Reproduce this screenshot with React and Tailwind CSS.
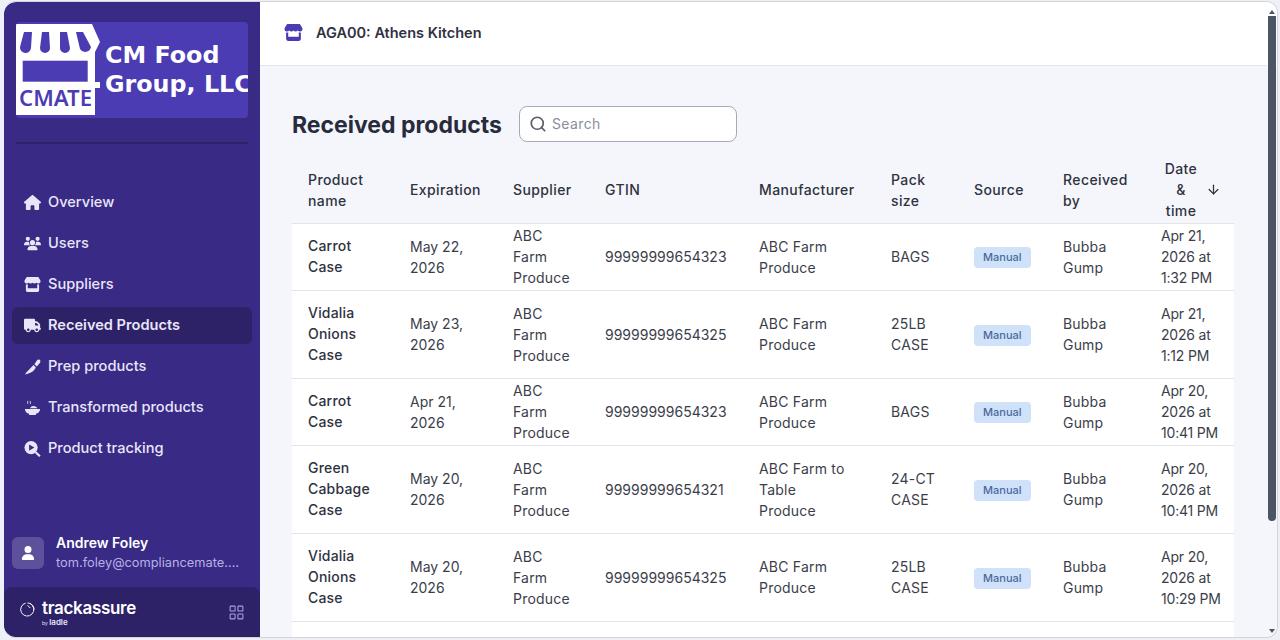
import { FaHouse, FaUsers, FaStore, FaTruck, FaUser } from "react-icons/fa6";
import { LuSearch, LuArrowDown, LuLayoutGrid } from "react-icons/lu";

const font = "font-['Inter','Liberation_Sans',sans-serif]";

function KnifeIcon() {
  return (
    <svg viewBox="0 0 18 18" className="w-[18px] h-[18px]" fill="currentColor">
      <path d="M1 17C5 16.5 9 14.5 11 12L12.6 9.6 10 7 6 11C4 13 2 15 1 17Z" />
      <path d="M11 6L13.6 8.6 17 4.4C17.6 3.4 17.4 2 16.6 1.4 15.8.8 14.8.9 14 1.7Z" />
    </svg>
  );
}

function BowlIcon() {
  return (
    <svg viewBox="0 0 18 18" className="w-[18px] h-[18px]" fill="currentColor">
      <path d="M1 10H17C17 12.8 15 14.6 12.6 15.2V16.5H5.4V15.2C3 14.6 1 12.8 1 10Z" />
      <path d="M6.5 9.2C7 7.6 8.4 6.8 10 6.8 12 6.8 13.4 7.8 14 9.2Z" />
      <path d="M3.6 1.5C4.6 2.6 3.2 3.4 4.2 4.6M6.4 1.5C7.4 2.6 6 3.4 7 4.6" fill="none" stroke="currentColor" strokeWidth="1" />
    </svg>
  );
}

function TrackIcon() {
  return (
    <svg viewBox="0 0 18 18" className="w-[18px] h-[18px]" fill="currentColor">
      <circle cx="7.5" cy="7.5" r="7" />
      <path d="M11.6 13.2L13.2 11.6 17.6 16 16 17.6Z" />
      <path d="M5.4 4.2V10.8L11 7.5Z" fill="#382a85" />
    </svg>
  );
}

const navItems = [
  { label: "Overview", icon: <FaHouse className="w-[17px] h-[17px]" /> },
  { label: "Users", icon: <FaUsers className="w-[17px] h-[17px]" /> },
  { label: "Suppliers", icon: <FaStore className="w-[17px] h-[17px]" /> },
  { label: "Received Products", icon: <FaTruck className="w-[17px] h-[17px]" />, active: true },
  { label: "Prep products", icon: <KnifeIcon /> },
  { label: "Transformed products", icon: <BowlIcon /> },
  { label: "Product tracking", icon: <TrackIcon /> },
];

const rows = [
  ["Carrot Case", "May 22, 2026", "99999999654323", "ABC Farm Produce", "BAGS", "Apr 21, 2026 at 1:32 PM"],
  ["Vidalia Onions Case", "May 23, 2026", "99999999654325", "ABC Farm Produce", "25LB CASE", "Apr 21, 2026 at 1:12 PM"],
  ["Carrot Case", "Apr 21, 2026", "99999999654323", "ABC Farm Produce", "BAGS", "Apr 20, 2026 at 10:41 PM"],
  ["Green Cabbage Case", "May 20, 2026", "99999999654321", "ABC Farm to Table Produce", "24-CT CASE", "Apr 20, 2026 at 10:41 PM"],
  ["Vidalia Onions Case", "May 20, 2026", "99999999654325", "ABC Farm Produce", "25LB CASE", "Apr 20, 2026 at 10:29 PM"],
];

function Logo() {
  return (
    <div className="h-24 rounded bg-[#4c3cb4] flex items-center overflow-hidden">
      <svg viewBox="0 0 86 96" className="w-[86px] h-24 shrink-0">
        <path d="M0 2H76L84 20 79 30V60H84V66H79V93H0Z" fill="#fff" />
        <path
          d="M8 10H16L15 26A5.5 5.5 0 0 1 4 25Z M26 10H33L34 26A5 5 0 0 1 24 26Z M44 10H51L54 26A5 5 0 0 1 44 26Z M60 10H67L75 25A6 6 0 0 1 64 27Z"
          fill="#4c3cb4"
        />
        <rect x="6.7" y="38.7" width="65" height="21" fill="#4c3cb4" />
        <text x="3" y="84" fill="#4c3cb4" className="font-['Noto_Sans',sans-serif] font-semibold" fontSize="22" textLength="73" lengthAdjust="spacingAndGlyphs">
          CMATE
        </text>
      </svg>
      <div className="pl-[3px] -mt-[1px] font-['DejaVu_Sans',sans-serif] font-bold text-white text-[23.8px] leading-[29px] whitespace-nowrap">
        CM Food
        <br />
        Group, LLC
      </div>
    </div>
  );
}

function Sidebar() {
  return (
    <aside className="w-[256px] shrink-0 bg-[#382a85] rounded-l-xl flex flex-col overflow-hidden">
      <div className="px-3 pt-5">
        <Logo />
        <div className="h-[2px] mt-6 bg-[#2d2268]" />
      </div>
      <nav className="mt-10 px-2 flex flex-col gap-1">
        {navItems.map((item) => (
          <a
            key={item.label}
            className={`h-[37px] px-3 flex items-center gap-[7px] rounded-md text-[#e9e6f8] text-[14.6px] ${
              item.active ? "bg-[#2d2268] font-semibold" : "font-medium"
            }`}
          >
            <span className="w-[17px] flex justify-center">{item.icon}</span>
            {item.label}
          </a>
        ))}
      </nav>
      <div className="mt-auto">
        <div className="px-2 pb-[14px] flex items-center gap-3">
          <div className="w-8 h-8 rounded-md bg-[#5d519c] flex items-center justify-center text-white">
            <FaUser className="w-[14px] h-[14px]" />
          </div>
          <div className="min-w-0">
            <div className="text-[14px] leading-[21px] font-semibold text-white">Andrew Foley</div>
            <div className="text-[12.8px] leading-[20px] text-[#b8b0e4] w-[190px] truncate">tom.foley@compliancemate.com</div>
          </div>
        </div>
        <div className="h-[50px] bg-[#2d2268] rounded-t-lg flex items-center px-4">
          <svg viewBox="0 0 16 16" className="w-[15px] h-[15px] -mt-[5px] text-white" fill="none" stroke="currentColor" strokeWidth="1">
            <path d="M6 1.2A7 7 0 1 0 11 1.8" />
            <path d="M8 1a7 7 0 0 1 7 7" />
            <path d="M8 3.5l3 3" />
          </svg>
          <div className="ml-[7px] mt-[4px]">
            <div className="text-white font-semibold text-[17px] leading-[17px] tracking-[-0.3px]">trackassure</div>
            <div className="text-[#e9e6f8] text-[8px] leading-[10px] font-semibold">
              <span className="text-[5px] font-normal">by </span>ladle
            </div>
          </div>
          <LuLayoutGrid className="ml-auto mr-[-1px] mt-[1px] w-[17px] h-[17px] text-[#a9a1dc]" strokeWidth={1.5} />
        </div>
      </div>
    </aside>
  );
}

const bodyCell = "px-4 pb-[1px] text-left align-middle font-normal";
const headCell = "px-4 pb-[2px] text-left align-middle font-medium";

function Table() {
  return (
    <table className="w-[942px] table-fixed border-collapse text-[14px] leading-[21px] tracking-[0.2px] text-[#3b3e4a]">
      <colgroup>
        <col className="w-[102px]" />
        <col className="w-[103px]" />
        <col className="w-[92px]" />
        <col className="w-[154px]" />
        <col className="w-[132px]" />
        <col className="w-[83px]" />
        <col className="w-[89px]" />
        <col className="w-[98px]" />
        <col className="w-[89px]" />
      </colgroup>
      <thead>
        <tr className="border-b border-[#e2e4ea] text-[#2f3240] tracking-[0.4px]">
          {["Product name", "Expiration", "Supplier", "GTIN", "Manufacturer", "Pack size", "Source", "Received by"].map((h) => (
            <th key={h} className={headCell}>{h}</th>
          ))}
          <th className="pl-4 pr-0 pb-[2px] font-medium">
            <div className="flex items-center">
              <span className="w-[40px] text-center">Date &amp; time</span>
              <LuArrowDown className="ml-[5px] w-[15px] h-[15px]" />
            </div>
          </th>
        </tr>
      </thead>
      <tbody className="bg-white">
        {rows.map((r, i) => (
          <tr key={i} className="border-b border-[#e2e4ea]">
            <td className="px-4 pt-[11px] pb-[13px] font-medium text-[#2f3240] align-middle">{r[0]}</td>
            <td className={`${bodyCell} tracking-normal`}>{r[1]}</td>
            <td className={bodyCell}>ABC Farm Produce</td>
            <td className={`${bodyCell} tracking-normal`}>{r[2]}</td>
            <td className={bodyCell}>
              <div className="max-w-[88px]">{r[3]}</div>
            </td>
            <td className={bodyCell}>{r[4]}</td>
            <td className={bodyCell}>
              <span className="inline-flex items-center h-[21px] px-[9px] rounded bg-[#cfe2f9] text-[#4a6a9c] text-[11px] tracking-normal font-medium">Manual</span>
            </td>
            <td className={bodyCell}>Bubba Gump</td>
            <td className="pl-4 pr-1 pb-[1px] font-normal tracking-[-0.2px] align-middle">{r[5]}</td>
          </tr>
        ))}
        <tr>
          <td colSpan={9} className="h-12" />
        </tr>
      </tbody>
    </table>
  );
}

export default function App() {
  return (
    <div className={`${font} h-[640px] overflow-hidden bg-[#eef0f8] pl-1 pb-[2px] pt-[1px] pr-[2px]`}>
      <div className="h-full flex border-t border-r border-b border-[#d4d4d8] rounded-xl overflow-hidden bg-[#f5f6fb]">
        <Sidebar />
        <main className="flex-1 min-w-0 flex flex-col overflow-hidden">
          <header className="h-[64px] shrink-0 bg-white border-b border-[#e2e4ea] flex items-center pl-6 gap-[13px]">
            <FaStore className="w-[19px] h-[17px] text-[#4c3cb4] -mt-[2px]" />
            <span className="text-[14.5px] font-semibold text-[#2f3240] -mt-[2px]">AGA00: Athens Kitchen</span>
          </header>
          <div className="flex-1 pl-8 overflow-hidden">
            <div className="mt-10 flex items-center gap-[17px]">
              <h1 className="text-[23px] leading-[34px] pt-[2px] font-bold text-[#282b3b]">Received products</h1>
              <div className="w-[218px] h-9 rounded-lg border border-[#a6a9b8] bg-white flex items-center pl-[9px] gap-[5px]">
                <LuSearch className="w-[18px] h-[18px] text-[#5b5e6b]" strokeWidth={2.3} />
                <span className="text-[14px] tracking-[0.4px] text-[#8b8e9b] -mt-[1px]">Search</span>
              </div>
            </div>
            <div className="mt-4">
              <Table />
            </div>
          </div>
        </main>
        <div className="w-[10px] shrink-0 bg-[linear-gradient(#fff_65px,#f5f6fb_65px)] flex flex-col items-center">
          <div className="mt-2 w-0 h-0 border-x-[3px] border-x-transparent border-b-[4px] border-b-[#4b5563]" />
          <div className="mt-[2px] w-2 h-[505px] rounded-b-sm bg-[#4b5563]" />
          <div className="flex-1" />
          <div className="mb-1 w-0 h-0 border-x-[3px] border-x-transparent border-t-[4px] border-t-[#4b5563]" />
        </div>
      </div>
    </div>
  );
}
